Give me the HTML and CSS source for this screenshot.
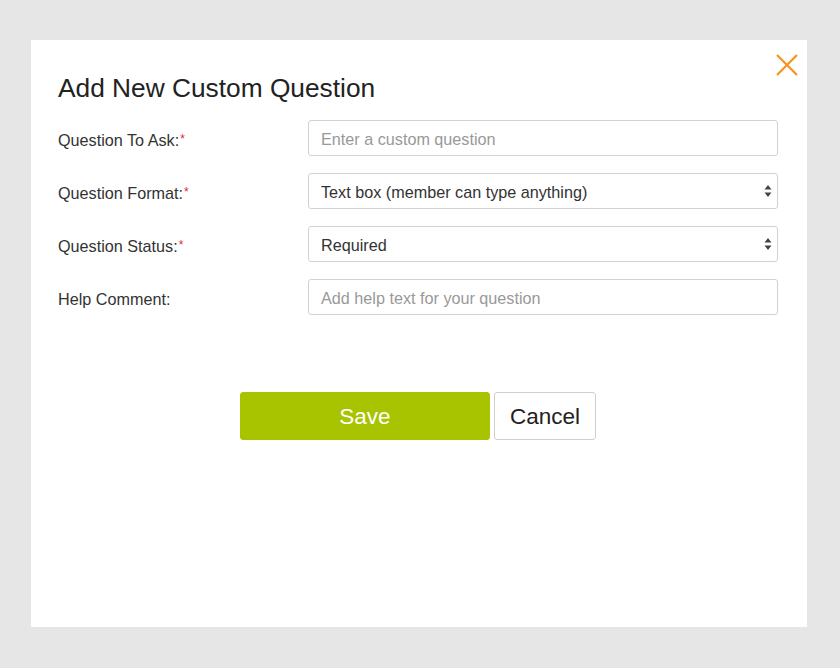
FILE: index.html
```html
<!DOCTYPE html>
<html>
<head>
<meta charset="utf-8">
<link rel="stylesheet" href="styles.css">
</head>
<body>
<div class="modal">
  <button class="close" aria-label="Close">
    <svg width="22" height="22" viewBox="0 0 22 22"><path d="M1 1 L21 21 M21 1 L1 21" stroke="#f7941e" stroke-width="2.2" fill="none"/></svg>
  </button>
  <h1 class="title">Add New Custom Question</h1>
  <form class="form">
    <label class="label">Question To Ask:<span class="req">*</span></label>
    <input class="field" type="text" placeholder="Enter a custom question">
    <label class="label">Question Format:<span class="req">*</span></label>
    <select class="field select"><option>Text box (member can type anything)</option></select>
    <label class="label">Question Status:<span class="req">*</span></label>
    <select class="field select"><option>Required</option></select>
    <label class="label">Help Comment:</label>
    <input class="field" type="text" placeholder="Add help text for your question">
  </form>
  <div class="actions">
    <button class="btn save">Save</button>
    <button class="btn cancel">Cancel</button>
  </div>
</div>
</body>
</html>
```
FILE: styles.css
```css
html, body { margin: 0; padding: 0; }
body {
  background: #e6e6e6;
  width: 840px;
  height: 668px;
  padding: 40px 0 0 31px;
  box-sizing: border-box;
  font-family: "Liberation Sans", Arial, sans-serif;
}
.modal {
  position: relative;
  width: 776px;
  height: 587px;
  background: #fff;
  box-sizing: border-box;
  padding: 33px 29px 0 27px;
}
.close {
  position: absolute;
  top: 14px;
  right: 9px;
  width: 22px;
  height: 22px;
  padding: 0;
  border: 0;
  background: none;
  display: block;
}
.close svg { display: block; }
.title {
  margin: 0 0 17px 0;
  font-size: 26.3px;
  line-height: 30px;
  font-weight: normal;
  color: #222;
}
.form {
  display: grid;
  grid-template-columns: 250px 470px;
  row-gap: 17px;
  align-items: center;
}
.label {
  font-size: 16.2px;
  color: #333;
  padding-top: 4px;
}
.req {
  color: #e8242b;
  font-size: 12px;
  vertical-align: top;
  position: relative;
  top: 1px;
  margin-left: 1px;
}
.field {
  height: 36px;
  box-sizing: border-box;
  border: 1px solid #d2d2d2;
  border-radius: 3px;
  padding: 2px 12px 0 12px;
  font-family: "Liberation Sans", Arial, sans-serif;
  font-size: 16.2px;
  color: #333;
  background: #fff;
  outline: none;
  width: 100%;
}
.field::placeholder { color: #999; }
.select {
  -webkit-appearance: none;
  appearance: none;
  background-image: url("data:image/svg+xml;utf8,<svg xmlns='http://www.w3.org/2000/svg' width='8' height='12' viewBox='0 0 8 12'><path d='M4 0 L7.5 4.6 L0.5 4.6 Z M4 12 L7.5 7.4 L0.5 7.4 Z' fill='%23444'/></svg>");
  background-repeat: no-repeat;
  background-position: right 5px center;
  background-size: 8px 12px;
}
.actions {
  display: flex;
  justify-content: center;
  gap: 4px;
  margin-top: 77px;
}
.btn {
  height: 48px;
  box-sizing: border-box;
  border-radius: 3px;
  font-family: "Liberation Sans", Arial, sans-serif;
  font-size: 22.5px;
  padding: 2px 14px 0 14px;
}
.save {
  width: 250px;
  background: #a8c300;
  color: #fff;
  border: 1px solid #a8c300;
}
.cancel {
  width: 102px;
  background: #fff;
  color: #222;
  border: 1px solid #cfcfcf;
}
```
